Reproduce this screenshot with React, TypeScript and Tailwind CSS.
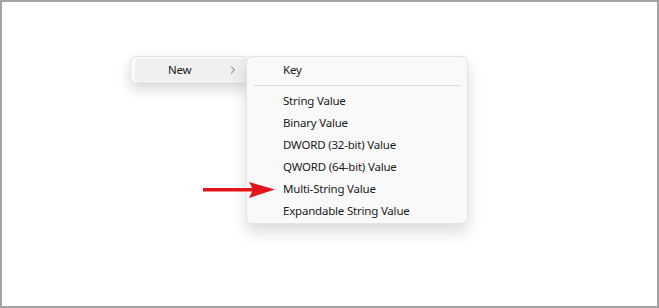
import { ChevronRight } from "lucide-react";

const ITEMS = [
  "String Value",
  "Binary Value",
  "DWORD (32-bit) Value",
  "QWORD (64-bit) Value",
  "Multi-String Value",
  "Expandable String Value",
];

function RedArrow() {
  return (
    <svg width="72" height="18" viewBox="0 0 72 18" aria-hidden>
      <rect x="0" y="7" width="50" height="3.5" fill="#e3141b" />
      <path d="M46 1 L72 8.5 L46 17 L50 8.5 Z" fill="#e3141b" />
    </svg>
  );
}

export default function App() {
  return (
    <div
      className="relative h-[308px] w-[659px] border-2 border-[#a3a3a3] bg-white pl-[128px] pt-[54px] text-[11.5px] tracking-[-0.2px] text-[#1b1b1b]"
      style={{ fontFamily: '"Noto Sans", "Segoe UI", sans-serif' }}
    >
      <div className="flex items-start">
        {/* parent menu */}
        <div className="w-[120px] rounded-[6px] border border-[#e3e3e3] bg-[#f9f9f9] pb-[1px] pl-[4px] pt-[2px] shadow-[0_6px_14px_rgba(0,0,0,0.16)]">
          <div className="flex h-[22px] items-center rounded-l-[4px] bg-[#efefef] pl-[33px] pr-[10px]">
            <span className="flex-1">New</span>
            <ChevronRight size={12} strokeWidth={1.5} className="text-[#333]" />
          </div>
        </div>

        {/* submenu */}
        <div className="-ml-[4px] w-[222px] rounded-[6px] border border-[#e3e3e3] bg-[#f9f9f9] pb-[1px] pt-[2px] shadow-[0_8px_16px_rgba(0,0,0,0.14)]">
          <div className="flex h-[22px] items-center pl-[36px]">Key</div>
          <div className="mx-[7px] my-[4px] h-px bg-[#d9d9d9]" />
          {ITEMS.map((label) => (
            <div key={label} className="flex h-[22px] items-center pl-[36px]">
              {label}
            </div>
          ))}
        </div>
      </div>

      <div className="absolute left-[201px] top-[179px]">
        <RedArrow />
      </div>
    </div>
  );
}
